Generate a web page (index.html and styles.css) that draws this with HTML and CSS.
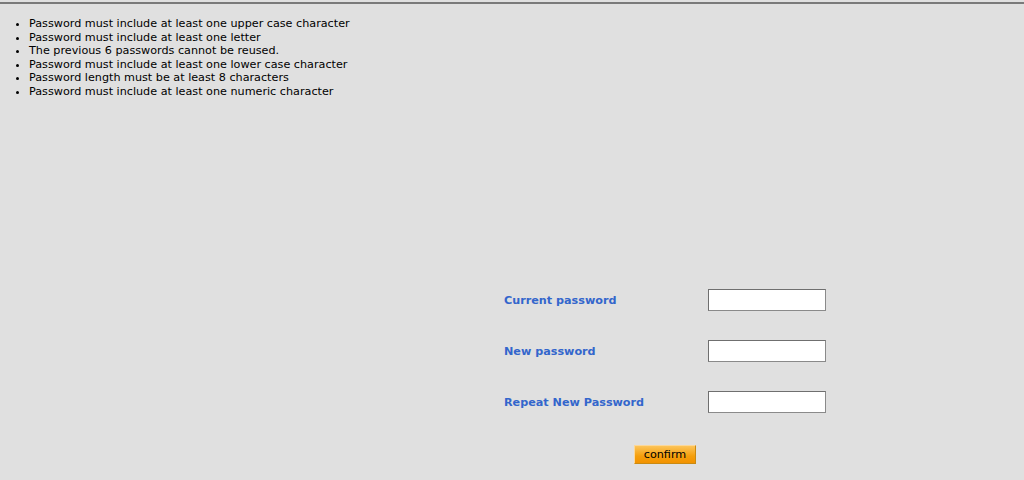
FILE: index.html
```html
<!DOCTYPE html>
<html lang="en">
<head>
    <meta charset="UTF-8">
    <title>Change password</title>
    <link rel="stylesheet" href="styles.css">
</head>
<body>
    <div class="page">
        <ul class="rules">
            <li>Password must include at least one upper case character</li>
            <li>Password must include at least one letter</li>
            <li>The previous 6 passwords cannot be reused.</li>
            <li>Password must include at least one lower case character</li>
            <li>Password length must be at least 8 characters</li>
            <li>Password must include at least one numeric character</li>
        </ul>

        <form class="pwd-form">
            <div class="row">
                <label for="current">Current password</label>
                <input type="password" id="current">
            </div>
            <div class="row">
                <label for="newpwd">New password</label>
                <input type="password" id="newpwd">
            </div>
            <div class="row">
                <label for="repeat">Repeat New Password</label>
                <input type="password" id="repeat">
            </div>
            <div class="actions">
                <button type="button">confirm</button>
            </div>
        </form>
    </div>
</body>
</html>
```

FILE: styles.css
```css
html, body {
    margin: 0;
    height: 100%;
}
body {
    font-family: "DejaVu Sans", Verdana, sans-serif;
    font-size: 11.2px;
    background-color: #e0e0e0;
    color: #000;
}
.page {
    box-sizing: border-box;
    height: 480px;
    border-top: 2px solid #7a7a7a;
    border-bottom: 2px solid #6e6e6e;
    margin-top: 2px;
    padding-top: 13px;
}
.rules {
    margin: 0;
    padding-left: 29px;
    line-height: 13.6px;
}
.pwd-form {
    display: flex;
    flex-direction: column;
    gap: 29px;
    margin-left: 504px;
    margin-top: 190px;
    width: 322px;
}
.row {
    display: flex;
    align-items: center;
    justify-content: space-between;
    height: 22px;
}
.row label {
    color: #3366cc;
    font-weight: bold;
    padding-top: 2px;
}
.row input {
    box-sizing: border-box;
    width: 118px;
    height: 22px;
    border: 1px solid #8a8a8a;
    border-top-color: #6f6f6f;
    border-left-color: #6f6f6f;
    background: #fff;
    padding: 2px;
}
.actions {
    text-align: center;
    margin-top: 3px;
}
button {
    font-family: inherit;
    font-size: 11.2px;
    padding: 1px 9px;
    height: 19px;
    border: 1px solid #c98a12;
    border-top-color: #fcd89a;
    border-left-color: #fcd89a;
    background: linear-gradient(#fcc45a, #f59e0b 60%, #f29200);
    color: #000;
    cursor: pointer;
}
```
